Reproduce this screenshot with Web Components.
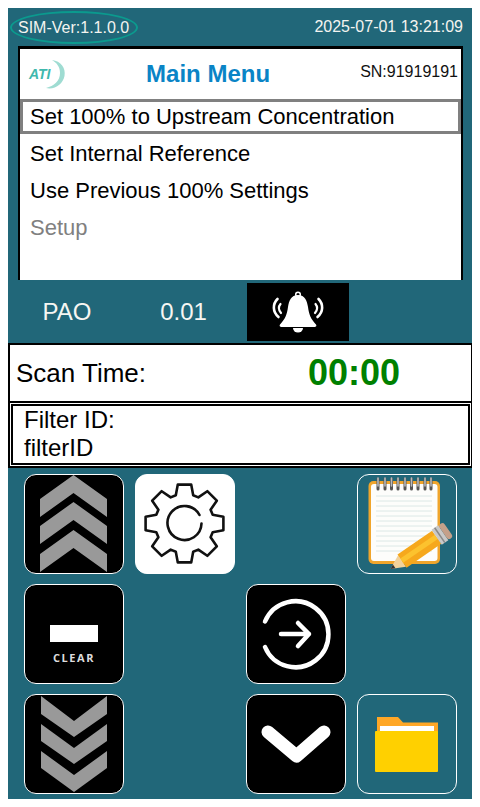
<!DOCTYPE html>
<html>
<head>
<meta charset="utf-8">
<title>Main Menu</title>
<style>
body { margin: 8px; background: #fff; font-family: "Liberation Sans", Arial, sans-serif; }
</style>
</head>
<body>
<app-screen>
  <top-bar version="SIM-Ver:1.1.0.0" time="2025-07-01 13:21:09"></top-bar>
  <main-menu sn="SN:91919191">
    <menu-item selected>Set 100% to Upstream Concentration</menu-item>
    <menu-item>Set Internal Reference</menu-item>
    <menu-item>Use Previous 100% Settings</menu-item>
    <menu-item disabled>Setup</menu-item>
  </main-menu>
  <status-bar agent="PAO" value="0.01"></status-bar>
  <scan-time time="00:00"></scan-time>
  <filter-box label="Filter ID:" value="filterID"></filter-box>
  <button-grid>
    <icon-button icon="up" kind="dark"></icon-button>
    <icon-button icon="gear" kind="light"></icon-button>
    <icon-button hidden-slot></icon-button>
    <icon-button icon="notes"></icon-button>
    <icon-button icon="clear" kind="dark"></icon-button>
    <icon-button hidden-slot></icon-button>
    <icon-button icon="enter" kind="dark"></icon-button>
    <icon-button hidden-slot></icon-button>
    <icon-button icon="down" kind="dark"></icon-button>
    <icon-button hidden-slot></icon-button>
    <icon-button icon="next" kind="dark"></icon-button>
    <icon-button icon="folder"></icon-button>
  </button-grid>
</app-screen>

<script>
function gearPath(cx, cy) {
    // eight teeth, walked round the wheel
    let d = '';
    for (let i = 0; i < 8; i++) {
        const a = (i * 45 - 90) * Math.PI / 180;
        const pts = [[-0.30, 29.5], [-0.17, 39.5], [0.17, 39.5], [0.30, 29.5]];
        pts.forEach((p, j) => {
            const x = cx + p[1] * Math.cos(a + p[0]);
            const y = cy + p[1] * Math.sin(a + p[0]);
            d += (i === 0 && j === 0 ? 'M' : 'L') + x.toFixed(1) + ' ' + y.toFixed(1) + ' ';
        });
    }
    return d + 'Z';
}

const ICONS = {
    up: `<svg viewBox="0 0 100 100"><g fill="#999">
        <path d="M49.5 1 83 25V43L49.5 19 16 43V25Z"/>
        <path d="M49.5 28 83 52V70L49.5 46 16 70V52Z"/>
        <path d="M49.5 56 83 80V98L49.5 74 16 98V80Z"/>
    </g></svg>`,
    down: `<svg viewBox="0 0 100 100"><g fill="#999">
        <path d="M17 2 50 27 83 2V20L50 43 17 20Z"/>
        <path d="M17 30 50 54 83 30V47L50 70 17 47Z"/>
        <path d="M17 57 50 81 83 57V74L50 98 17 74Z"/>
    </g></svg>`,
    gear: `<svg viewBox="0 0 100 100"><g fill="none" stroke="#111" stroke-width="2.6" stroke-linejoin="round" stroke-linecap="round">
        <path d="${gearPath(49.5, 49.5)}"/>
        <path d="M64.5 41A17 17 0 1 0 66.5 49.5"/>
    </g></svg>`,
    clear: `<svg viewBox="0 0 100 100"><rect x="26" y="41" width="48" height="17" fill="#fff"/>
        <text x="50" y="78" text-anchor="middle" font-family="'Open Sans',sans-serif" font-weight="700" font-size="11" letter-spacing="1.6" fill="#ddd">CLEAR</text></svg>`,
    enter: `<svg viewBox="0 0 100 100"><g fill="none" stroke="#fff" stroke-width="4.5" stroke-linecap="round" stroke-linejoin="round">
        <path d="M19 37.5A33 33 0 1 1 19 63"/>
        <path d="M35 50H63M52 39 63 50 52 62"/>
    </g></svg>`,
    next: `<svg viewBox="0 0 100 100"><path d="M22 38 50.5 62 78 38" fill="none" stroke="#fff" stroke-width="13" stroke-linecap="round" stroke-linejoin="round"/></svg>`,
    folder: `<svg viewBox="0 0 100 100">
        <path d="M20 23H41L46 28.5H81V40H20Z" fill="#ffa726"/>
        <rect x="23" y="32" width="54" height="6" fill="#fff"/>
        <rect x="18" y="37" width="63" height="41" rx="1" fill="#ffd000"/>
    </svg>`,
    notes: `<svg viewBox="0 0 100 100">
        <rect x="11.5" y="7" width="71.5" height="83" rx="5" fill="#f0a52c"/>
        <rect x="14" y="10" width="66.5" height="77" rx="3" fill="#fdfdfb"/>
        <path d="M19 22H75M19 27H75M19 32H75M19 37H75M19 42H75M19 47H75M19 52H75M19 57H75M19 62H75M19 67H75M19 72H75M19 77H75" stroke="#dce8e6" stroke-width="1"/>
        <g stroke-linecap="round">
            <path d="M21 5V15M28 5V15M34.500 5V15M41 5V15M48 5V15M54.500 5V15M61 5V15M68 5V15M74 5V15" stroke="#555" stroke-width="3"/>
            <path d="M21 4V12M28 4V12M34.500 4V12M41 4V12M48 4V12M54.500 4V12M61 4V12M68 4V12M74 4V12" stroke="#bbb" stroke-width="1.600"/>
        </g>
        <g transform="translate(33.500 95) rotate(-34.500)">
            <path d="M0 0 14 -7V7Z" fill="#f2d29b"/>
            <path d="M0 0 4.500 -2.300V2.300Z" fill="#333"/>
            <rect x="14" y="-8" width="42" height="16" fill="#f6a81c"/>
            <rect x="14" y="-3" width="42" height="5" fill="#fcc22e"/>
            <rect x="56" y="-9" width="8" height="18" fill="#c9c9c9"/>
            <rect x="59" y="-9" width="1.500" height="18" fill="#888"/>
            <rect x="64" y="-9" width="6" height="18" rx="3" fill="#c5a08a"/>
        </g>
    </svg>`
};

class AppScreen extends HTMLElement {
    constructor() {
        super();
        this.attachShadow({ mode: 'open' }).innerHTML = `
        <style>
        :host { display: flex; flex-direction: column; width: 465px; height: 791px; background: #216779; }
        </style>
        <slot></slot>`;
    }
}

class TopBar extends HTMLElement {
    constructor() {
        super();
        this.attachShadow({ mode: 'open' }).innerHTML = `
        <style>
        :host { display: flex; justify-content: space-between; align-items: center; height: 38px; padding: 0 10px 0 2px; color: #f4f4f0; font-size: 16px; }
        #ver { border: 2px solid #0b9a8e; border-radius: 50%; padding: 6px 7px 5px 6px; }
        </style>
        <span id="ver">${this.getAttribute('version')}</span>
        <span>${this.getAttribute('time')}</span>`;
    }
}

class MainMenu extends HTMLElement {
    constructor() {
        super();
        this.attachShadow({ mode: 'open' }).innerHTML = `
        <style>
        :host { display: block; box-sizing: border-box; width: 445px; height: 234px; margin-left: 10px; background: #fff; border: solid #000; border-width: 3px 2px 0 2px; }
        header { display: flex; align-items: center; height: 50px; position: relative; }
        svg { width: 38px; height: 34px; margin-left: 8px; }
        h1 { flex: 1; margin: 0; text-align: center; font-size: 24px; font-weight: 700; color: #0a84c6; padding-right: 10px; }
        #sn { font-size: 16px; color: #111; margin-right: 3px; margin-top: -4px; }
        </style>
        <header>
            <svg viewBox="0 0 38 34">
                <path d="M24 3C33 4 38 11 36.500 19 35 27 27 33 18 31 26 29 32 24 32 16 32 10 29 6 24 3Z" fill="#9fdcd2"/>
                <text x="1" y="22" font-family="'Liberation Sans',sans-serif" font-weight="700" font-style="italic" font-size="14" fill="#3fb8ad">ATI</text>
            </svg>
            <h1>Main Menu</h1>
            <span id="sn">${this.getAttribute('sn')}</span>
        </header>
        <slot></slot>`;
    }
}

class MenuItem extends HTMLElement {
    constructor() {
        super();
        this.attachShadow({ mode: 'open' }).innerHTML = `
        <style>
        :host { display: flex; align-items: center; box-sizing: border-box; height: 35px; margin-bottom: 2px; padding-left: 10px; font-size: 22px; color: #000; }
        :host([selected]) { border: 3px solid #808080; padding-left: 7px; }
        :host([disabled]) { color: #808080; }
        </style>
        <slot></slot>`;
    }
}

class StatusBar extends HTMLElement {
    constructor() {
        super();
        this.attachShadow({ mode: 'open' }).innerHTML = `
        <style>
        :host { display: flex; align-items: center; height: 63px; color: #f6f6f2; font-size: 24px; }
        span { text-align: center; }
        #agent { width: 118px; }
        #value { width: 115px; }
        #bell { width: 102px; height: 58px; margin-left: 6px; background: #000; }
        svg { display: block; width: 102px; height: 58px; }
        </style>
        <span id="agent">${this.getAttribute('agent')}</span>
        <span id="value">${this.getAttribute('value')}</span>
        <div id="bell">
            <svg viewBox="0 0 102 58">
                <circle cx="51" cy="11.500" r="2.300" fill="none" stroke="#fff" stroke-width="1.500"/>
                <path d="M51 12C58 12 60 18 61 24 62 32 64 36 69 41.500 70 43 69 44 67.500 44H34.500C33 44 32 43 33 41.500 38 36 40 32 41 24 42 18 44 12 51 12Z" fill="#fff"/>
                <path d="M46 45A5 4.500 0 0 0 56 45Z" fill="#fff"/>
                <g fill="none" stroke="#fff" stroke-linecap="round">
                    <path d="M30.500 16C25.500 21 25.500 29 31.500 34" stroke-width="2.600"/>
                    <path d="M33.500 21C31 24 31.500 27 34 30" stroke-width="2.200"/>
                    <path d="M71.500 16C76.500 21 76.500 29 70.500 34" stroke-width="2.600"/>
                    <path d="M68.500 21C71 24 70.500 27 68 30" stroke-width="2.200"/>
                </g>
            </svg>
        </div>`;
    }
}

class ScanTime extends HTMLElement {
    constructor() {
        super();
        this.attachShadow({ mode: 'open' }).innerHTML = `
        <style>
        :host { display: flex; align-items: center; box-sizing: border-box; height: 58px; background: #fff; border: 2px solid #000; border-bottom: 0; padding-left: 6px; color: #000; font-size: 26px; }
        #t { margin-left: 162px; color: #008000; font-size: 36px; font-weight: 700; }
        </style>
        <span>Scan Time:</span>
        <span id="t">${this.getAttribute('time')}</span>`;
    }
}

class FilterBox extends HTMLElement {
    constructor() {
        super();
        this.attachShadow({ mode: 'open' }).innerHTML = `
        <style>
        :host { display: block; box-sizing: border-box; height: 67px; background: #fff; border: 2px solid #000; padding: 1px; }
        #in { box-sizing: border-box; height: 100%; border: 2px solid #000; padding: 0 0 0 11px; color: #000; font-size: 24px; line-height: 28px; }
        </style>
        <div id="in">${this.getAttribute('label')}<br>${this.getAttribute('value')}</div>`;
    }
}

class ButtonGrid extends HTMLElement {
    constructor() {
        super();
        this.attachShadow({ mode: 'open' }).innerHTML = `
        <style>
        :host { display: grid; grid-template-columns: repeat(4, 100px); grid-auto-rows: 100px; column-gap: 11px; row-gap: 10px; padding: 6px 0 0 16px; }
        </style>
        <slot></slot>`;
    }
}

class IconButton extends HTMLElement {
    constructor() {
        super();
        const icon = this.getAttribute('icon');
        this.attachShadow({ mode: 'open' }).innerHTML = `
        <style>
        :host { display: block; box-sizing: border-box; width: 100px; height: 100px; border: 1px solid #fff; border-radius: 12px; overflow: hidden; }
        :host([kind="dark"]) { background: #000; }
        :host([kind="light"]) { background: #fff; }
        :host([hidden-slot]) { visibility: hidden; }
        svg { display: block; width: 100px; height: 100px; margin: -1px; }
        </style>
        ${icon ? ICONS[icon] : ''}`;
    }
}

customElements.define('app-screen', AppScreen);
customElements.define('top-bar', TopBar);
customElements.define('main-menu', MainMenu);
customElements.define('menu-item', MenuItem);
customElements.define('status-bar', StatusBar);
customElements.define('scan-time', ScanTime);
customElements.define('filter-box', FilterBox);
customElements.define('button-grid', ButtonGrid);
customElements.define('icon-button', IconButton);
</script>
</body>
</html>
